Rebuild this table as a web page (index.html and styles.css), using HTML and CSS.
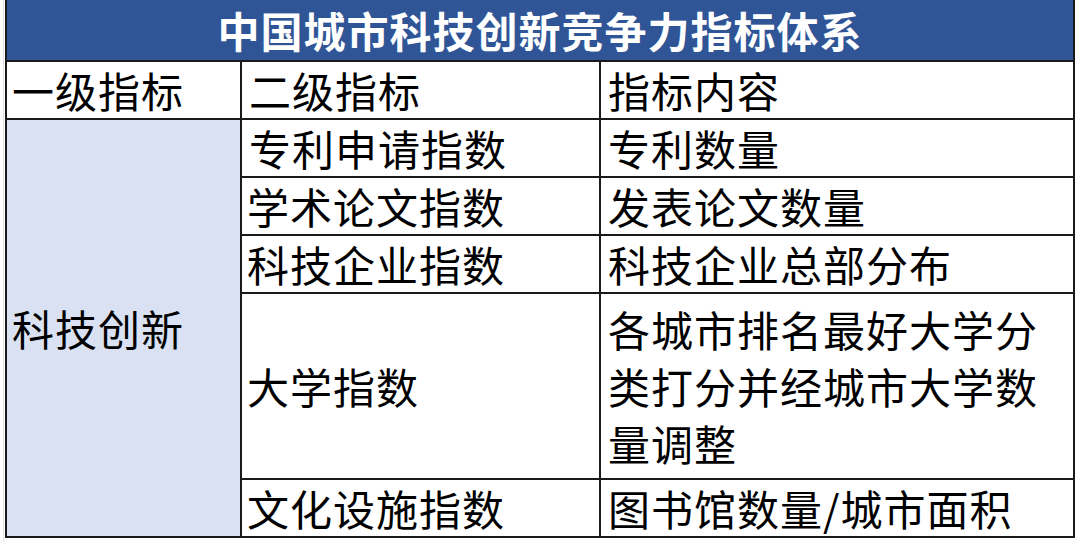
FILE: index.html
```html
<!DOCTYPE html>
<html lang="zh-CN">
<head>
<meta charset="utf-8">
<link rel="stylesheet" href="styles.css">
</head>
<body>
<div class="sheet">
  <table class="grid">
    <colgroup>
      <col class="c1">
      <col class="c2">
      <col class="c3">
    </colgroup>
    <thead>
      <tr class="title-row"><th colspan="3" class="title">中国城市科技创新竞争力指标体系</th></tr>
    </thead>
    <tbody>
      <tr class="row"><td>一级指标</td><td>二级指标</td><td>指标内容</td></tr>
      <tr class="row"><td rowspan="5" class="cat">科技创新</td><td>专利申请指数</td><td>专利数量</td></tr>
      <tr class="row"><td>学术论文指数</td><td>发表论文数量</td></tr>
      <tr class="row"><td>科技企业指数</td><td>科技企业总部分布</td></tr>
      <tr class="tall"><td>大学指数</td><td class="wrap">各城市排名最好大学分类打分并经城市大学数量调整</td></tr>
      <tr class="row"><td>文化设施指数</td><td>图书馆数量/城市面积</td></tr>
    </tbody>
  </table>
</div>
</body>
</html>
```
FILE: styles.css
```css
html, body {
  margin: 0;
  padding: 0;
  background: #ffffff;
}
body {
  font-family: "Noto Sans CJK SC", "Noto Sans", sans-serif;
  color: #000;
}
.sheet {
  width: 1077px;
  height: 542px;
  box-sizing: border-box;
  padding-left: 2px;
  border-left: 1px solid #e2e2e2;
  margin-left: 3px;
  overflow: hidden;
}
.grid {
  border-collapse: collapse;
  table-layout: fixed;
  width: 1068px;
  margin-left: -1px;
}
.c1 { width: 235px; }
.c2 { width: 359px; }
.c3 { width: 474px; }
.title-row { height: 60px; }
.title {
  background: #2f5597;
  color: #ffffff;
  font-weight: 700;
  font-size: 42px;
  line-height: 54px;
  padding: 0;
  text-align: center;
  border: 2px solid #1a1a1a;
  border-top: 1px solid #2f5597;
  letter-spacing: 1px;
}
.grid td {
  border: 2px solid #1a1a1a;
  font-size: 42px;
  line-height: 54px;
  padding: 0 0 0 7px;
  vertical-align: middle;
  white-space: nowrap;
  letter-spacing: 1px;
}
.grid td:first-child { padding-left: 5px; }
.row { height: 58px; }
.tall { height: 186px; }
.grid td.cat {
  background: #d9e1f2;
  padding-left: 5px;
}
.grid td.wrap {
  white-space: normal;
  line-height: 57px;
  padding-right: 20px;
}
```
